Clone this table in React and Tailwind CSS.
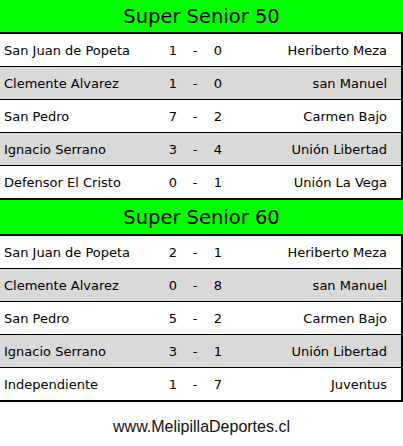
import React from "react";

const sections = [
  {
    title: "Super Senior 50",
    headerH: "h-[31px]",
    games: [
      ["San Juan de Popeta", "1", "0", "Heriberto Meza"],
      ["Clemente Alvarez", "1", "0", "san Manuel"],
      ["San Pedro", "7", "2", "Carmen Bajo"],
      ["Ignacio Serrano", "3", "4", "Unión Libertad"],
      ["Defensor El Cristo", "0", "1", "Unión La Vega"],
    ],
  },
  {
    title: "Super Senior 60",
    headerH: "h-[33px]",
    games: [
      ["San Juan de Popeta", "2", "1", "Heriberto Meza"],
      ["Clemente Alvarez", "0", "8", "san Manuel"],
      ["San Pedro", "5", "2", "Carmen Bajo"],
      ["Ignacio Serrano", "3", "1", "Unión Libertad"],
      ["Independiente", "1", "7", "Juventus"],
    ],
  },
];

const Row = ({ game, index, last }) => {
  const [home, a, b, away] = game;
  // alternate white / grey like the spreadsheet
  const bg = index % 2 === 1 ? "bg-[#d9d9d9]" : "bg-white";
  const border = last ? "border-b-2 h-[34px]" : "border-b h-[33px]";
  return (
    <div
      className={`grid grid-cols-[158px_22px_22px_24px_1fr] items-center pl-[4px] pr-[14px] pt-[2px] border-r-2 border-black ${border} ${bg}`}
    >
      <span className="whitespace-nowrap">{home}</span>
      <span className="text-center">{a}</span>
      <span className="text-center">-</span>
      <span className="text-center">{b}</span>
      <span className="text-right whitespace-nowrap">{away}</span>
    </div>
  );
};

export default function App() {
  return (
    <div
      className="w-[403px] h-[446px] bg-white text-black text-[13px] overflow-hidden"
      style={{ fontFamily: '"DejaVu Sans", Verdana, sans-serif' }}
    >
      {sections.map((s) => (
        <div key={s.title}>
          {/* Green title bar */}
          <div
            className={`${s.headerH} bg-[#00ff00] border-b-2 border-black flex items-center justify-center pt-[1px] text-[19.5px] box-content`}
          >
            {s.title}
          </div>
          {s.games.map((g, i) => (
            <Row key={i} game={g} index={i} last={i === s.games.length - 1} />
          ))}
        </div>
      ))}

      {/* Footer */}
      <div
        className="h-[46px] flex items-center justify-center pt-[3px] text-[16px] text-[#111]"
        style={{ fontFamily: '"Liberation Sans", Arial, sans-serif' }}
      >
        www.MelipillaDeportes.cl
      </div>
    </div>
  );
}
